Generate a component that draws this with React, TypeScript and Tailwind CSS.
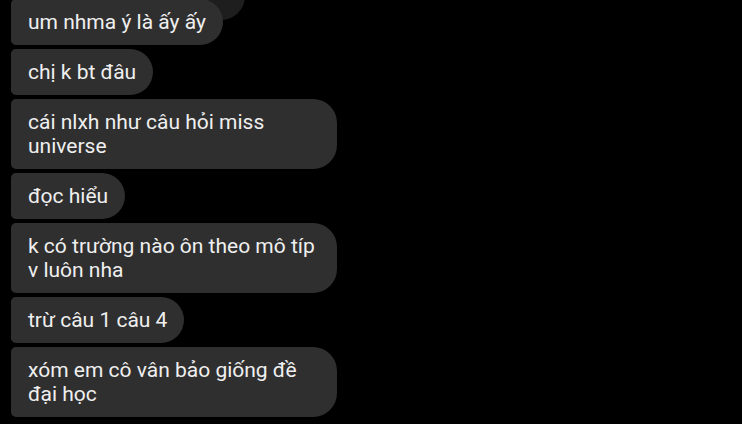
const messages: string[][] = [
  ["um nhma ý là ấy ấy"],
  ["chị k bt đâu"],
  ["cái nlxh như câu hỏi miss", "universe"],
  ["đọc hiểu"],
  ["k có trường nào ôn theo mô típ", "v luôn nha"],
  ["trừ câu 1 câu 4"],
  ["xóm em cô vân bảo giống đề", "đại học"],
];

function Bubble({ lines }: { lines: string[] }) {
  const multi = lines.length > 1;
  return (
    <div
      className={
        "relative z-10 bg-[#2f2f2f] text-[#efefef] text-[21px] leading-[24px] py-[11px] px-[17px] rounded-l-[5px] rounded-r-[24px] " +
        (multi ? "w-[326px]" : "w-fit")
      }
    >
      {lines.map((l, i) => (
        <div key={i} className="whitespace-nowrap">
          {l}
        </div>
      ))}
    </div>
  );
}

export default function App() {
  return (
    <div
      className="w-[742px] h-[424px] bg-black overflow-hidden"
      style={{ fontFamily: "Roboto, 'Noto Sans', sans-serif" }}
    >
      <div className="relative flex flex-col gap-[4px] px-[11px] -mt-[1px]">
        {/* earlier message, mostly scrolled off */}
        <div className="absolute left-[40px] top-[-29px] w-[205px] h-[50px] bg-[#1e1e1e] rounded-[24px]" />
        {messages.map((m, i) => (
          <Bubble key={i} lines={m} />
        ))}
      </div>
    </div>
  );
}
